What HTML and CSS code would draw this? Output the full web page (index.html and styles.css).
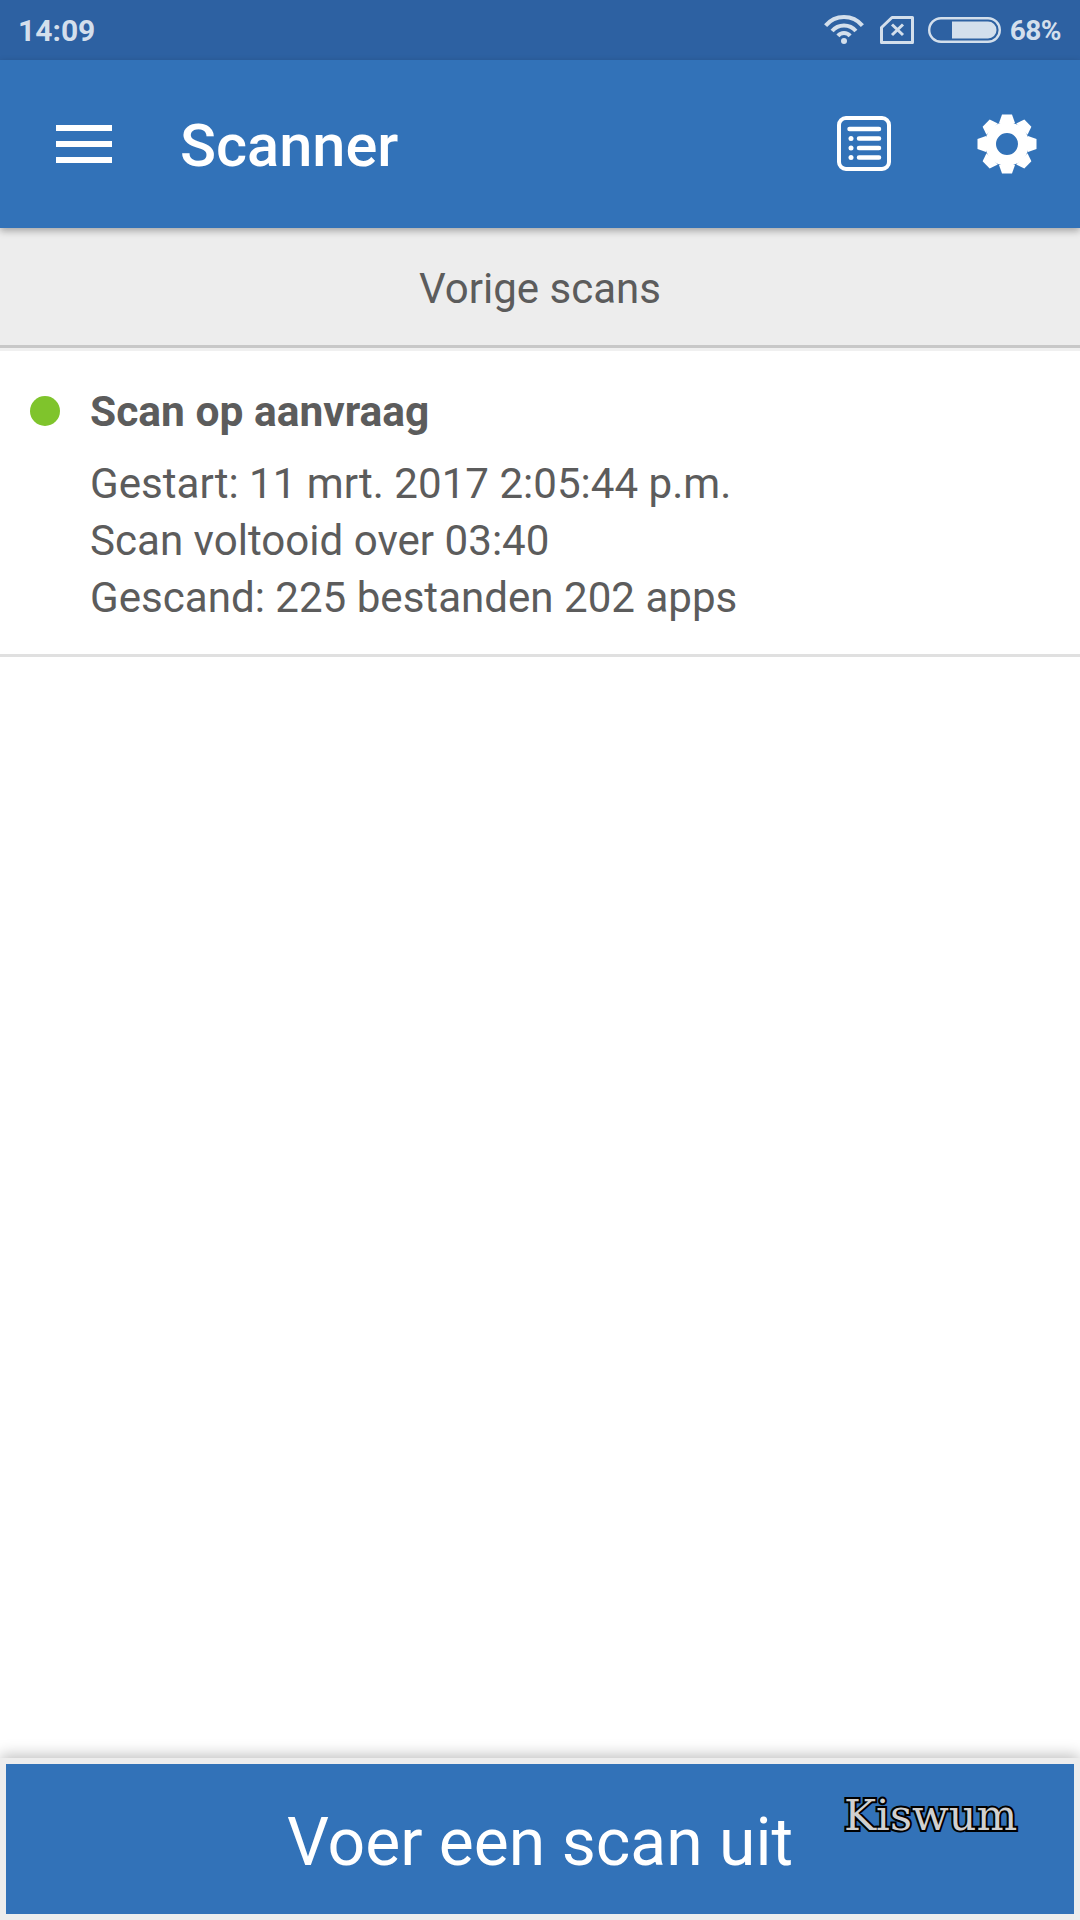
FILE: index.html
```html
<!DOCTYPE html>
<html lang="nl">
<head>
  <meta charset="UTF-8">
  <title>Scanner</title>
  <link rel="stylesheet" href="styles.css">
</head>
<body>
  <!-- Status bar -->
  <div class="status-bar">
    <span class="status-time">14:09</span>
    <div class="status-icons">
      <svg class="icon-wifi" width="40" height="30" viewBox="0 0 40 30">
        <path d="M1.6 10.6A24 24 0 0 1 38.4 10.6M8.1 16A15.5 15.5 0 0 1 31.9 16M13.9 20.9A8 8 0 0 1 26.1 20.9" fill="none" stroke="#d3dfec" stroke-width="4"/>
        <circle cx="20" cy="26" r="3" fill="#d3dfec"/>
      </svg>
      <svg class="icon-sim" width="34" height="28" viewBox="0 0 34 28">
        <path d="M12 1.5H32.500V26.500H1.500V11.500Z" fill="none" stroke="#d3dfec" stroke-width="3" stroke-linejoin="round"/>
        <path d="M12 8.500L23 19M23 8.500L12 19" fill="none" stroke="#d3dfec" stroke-width="3"/>
      </svg>
      <svg class="icon-battery" width="73" height="26" viewBox="0 0 73 26">
        <rect x="1.2" y="1.2" width="70.6" height="23.6" rx="11.8" fill="none" stroke="#d3dfec" stroke-width="2.4"/>
        <path d="M24 4.500H60A8.500 8.500 0 0 1 60 21.500H24Z" fill="#d3dfec"/>
      </svg>
      <span class="status-level">68%</span>
    </div>
  </div>

  <!-- App bar -->
  <header class="app-bar">
    <div class="menu-btn"><span></span><span></span><span></span></div>
    <h1 class="app-title">Scanner</h1>
    <div class="app-actions">
      <svg width="54" height="56" viewBox="0 0 54 56">
        <rect x="2" y="2" width="50" height="51" rx="7" fill="none" stroke="#fff" stroke-width="4"/>
        <path d="M12.500 13H42M22 22.500H42M22 32H42M22 41.500H42" fill="none" stroke="#fff" stroke-width="4.500" stroke-linecap="round"/>
        <circle cx="14" cy="22.500" r="2.500" fill="#fff"/>
        <circle cx="14" cy="32" r="2.500" fill="#fff"/>
        <circle cx="14" cy="41.500" r="2.500" fill="#fff"/>
      </svg>
      <svg width="60" height="60" viewBox="-30 -30 60 60">
        <circle r="16.500" fill="none" stroke="#fff" stroke-width="11"/>
        <path id="tooth" d="M-8 -21L-5 -29.500H5L8 -21Z" fill="#fff"/>
        <use href="#tooth" transform="rotate(45)"/>
        <use href="#tooth" transform="rotate(90)"/>
        <use href="#tooth" transform="rotate(135)"/>
        <use href="#tooth" transform="rotate(180)"/>
        <use href="#tooth" transform="rotate(225)"/>
        <use href="#tooth" transform="rotate(270)"/>
        <use href="#tooth" transform="rotate(315)"/>
      </svg>
    </div>
  </header>

  <div class="section-head">Vorige scans</div>

  <!-- Scan history -->
  <main class="scan-list">
    <div class="scan-item">
      <span class="scan-dot"></span>
      <div class="scan-info">
        <div class="scan-title">Scan op aanvraag</div>
        <div class="scan-line">Gestart: 11 mrt. 2017 2:05:44 p.m.</div>
        <div class="scan-line">Scan voltooid over 03:40</div>
        <div class="scan-line">Gescand: 225 bestanden 202 apps</div>
      </div>
    </div>
  </main>

  <footer class="scan-footer">
    <button class="scan-btn">Voer een scan uit</button>
    <span class="watermark">Kiswum</span>
  </footer>
</body>
</html>
```

FILE: styles.css
```css
html, body {
  margin: 0;
  padding: 0;
  width: 1080px;
  height: 1920px;
  overflow: hidden;
}
body {
  display: flex;
  flex-direction: column;
  background: #fff;
  font-family: Roboto, "Liberation Sans", sans-serif;
  color: #5c5c5c;
}
/* Status bar */
.status-bar {
  display: flex;
  align-items: center;
  justify-content: space-between;
  height: 60px;
  padding: 0 19px 0 18px;
  background: #2d61a2;
  color: #d3dfec;
  box-sizing: border-box;
}
.status-time {
  font-size: 30px;
  font-weight: 700;
}
.status-icons {
  display: flex;
  align-items: center;
  gap: 16px;
}
.icon-sim {
  margin-right: -2px;
}
.status-level {
  font-size: 28px;
  font-weight: 700;
  letter-spacing: -0.5px;
  margin-left: -7px;
}
/* App bar */
.app-bar {
  position: relative;
  z-index: 2;
  display: flex;
  align-items: center;
  height: 168px;
  padding: 0 43px 0 56px;
  background: #3272b8;
  color: #fff;
  box-sizing: border-box;
  box-shadow: 0 3px 7px rgba(0, 0, 0, 0.3);
}
.menu-btn {
  display: flex;
  flex-direction: column;
  gap: 10px;
  width: 56px;
}
.menu-btn span {
  display: block;
  height: 6px;
  background: #fff;
}
.app-title {
  margin: 4px 0 0 68px;
  font-size: 59.5px;
  font-weight: 500;
}
.app-actions {
  display: flex;
  align-items: center;
  gap: 86px;
  margin-left: auto;
}
/* Section header */
.section-head {
  height: 117px;
  line-height: 122px;
  text-align: center;
  font-size: 42px;
  background: #ededed;
  border-bottom: 3px solid #c8c8c8;
}
/* Scan list */
.scan-list {
  flex: 1;
  border-top: 3px solid #f0f0f0;
}
.scan-item {
  display: flex;
  padding: 38px 0 28px 30px;
  border-bottom: 3px solid #e0e0e0;
}
.scan-dot {
  flex: none;
  width: 30px;
  height: 30px;
  margin-top: 7px;
  border-radius: 50%;
  background: #7fc42c;
}
.scan-info {
  margin-left: 30px;
}
.scan-title {
  margin-bottom: 20px;
  font-size: 42.5px;
  font-weight: 700;
  line-height: 46px;
}
.scan-line {
  font-size: 42.1px;
  line-height: 57px;
}
/* Bottom button */
.scan-footer {
  position: relative;
  padding: 6px;
  background: #ededed;
  box-shadow: 0 -3px 14px rgba(0, 0, 0, 0.25);
}
.scan-btn {
  display: block;
  width: 100%;
  height: 150px;
  padding: 6px 0 0;
  border: none;
  background: #3272b8;
  color: #fff;
  font-family: Roboto, "Liberation Sans", sans-serif;
  font-size: 66px;
}
.watermark {
  position: absolute;
  left: 844px;
  top: 35px;
  font-family: "DejaVu Serif", serif;
  font-size: 43px;
  line-height: 44px;
  color: #d0d0d0;
  -webkit-text-stroke: 4px #000;
  paint-order: stroke fill;
}
```
